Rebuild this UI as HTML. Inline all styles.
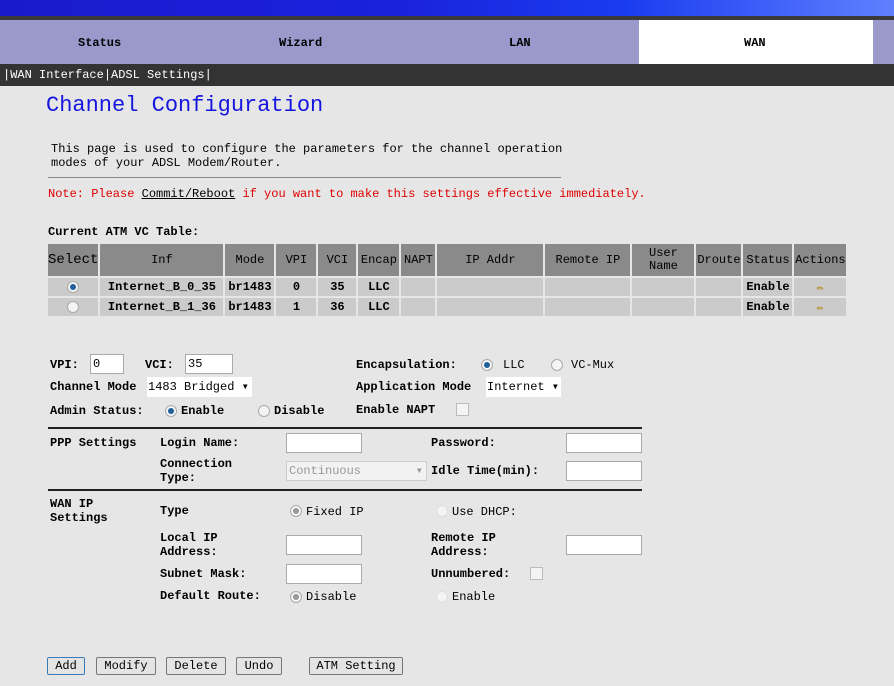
<!DOCTYPE html>
<html><head><meta charset="utf-8"><style>
*{margin:0;padding:0;box-sizing:border-box}
body{width:894px;height:686px;background:#e6e6e6;font-family:"Liberation Mono","Noto Sans CJK SC",monospace;font-size:12px;color:#000;position:relative;overflow:hidden}
.a{position:absolute;white-space:nowrap;line-height:14px}
.b{font-weight:bold}
.in{position:absolute;background:#fff;border:1px solid #aaa;height:20px}
.rad{position:absolute;width:12px;height:12px;border-radius:50%;border:1px solid #aaa;background:#f4f4f4}
.rad.on::after{content:"";position:absolute;left:2px;top:2px;width:6px;height:6px;border-radius:50%;background:#1f5f9a}
.rad.dis.on::after{background:#999}
.hr{position:absolute;left:48px;width:594px;height:2px;background:#222}
.btn{position:absolute;top:657px;height:18px;border:1px solid #777;background:#e4e4e4;font-size:12px;line-height:16px;text-align:center;border-radius:2px}
table{position:absolute;left:48px;top:244px;border-collapse:separate;border-spacing:2px 2px;margin:-2px}
td{text-align:center;font-size:12px;padding:0}
tr.h td{background:#8a8a8a;height:32px;line-height:13px}
tr.r td{background:#cbcbcb;height:18px;font-weight:bold}
</style></head><body>
<div style="position:absolute;left:0;top:0;width:894px;height:16px;background:linear-gradient(90deg,#1a1acc 0%,#1a22dd 45%,#1a3cf0 70%,#6080ff 100%)"></div>
<div style="position:absolute;left:0;top:16px;width:894px;height:4px;background:#3a3a3a"></div>
<div style="position:absolute;left:0;top:20px;width:894px;height:44px;background:#9999cc"></div>
<div style="position:absolute;left:639px;top:20px;width:234px;height:44px;background:#fff"></div>
<div class="a b" style="left:78px;top:36px">Status</div>
<div class="a b" style="left:279px;top:36px">Wizard</div>
<div class="a b" style="left:509px;top:36px">LAN</div>
<div class="a b" style="left:744px;top:36px">WAN</div>
<div style="position:absolute;left:0;top:64px;width:894px;height:22px;background:#333"></div>
<div class="a" style="left:3px;top:68px;color:#fff">|WAN Interface|ADSL Settings|</div>
<div class="a" style="left:46px;top:94px;font-size:22px;line-height:24px;color:#1515e0">Channel Configuration</div>
<div class="a" style="left:51px;top:142px">This page is used to configure the parameters for the channel operation<br>modes of your ADSL Modem/Router.</div>
<div style="position:absolute;left:48px;top:177px;width:513px;height:1px;background:#888"></div>
<div class="a" style="left:48px;top:187px;color:#e00000">Note: Please <span style="color:#000;text-decoration:underline">Commit/Reboot</span> if you want to make this settings effective immediately.</div>
<div class="a b" style="left:48px;top:225px">Current ATM VC Table:</div>
<table>
<tr class="h"><td style="width:50px;font-size:14px">Select</td><td style="width:123px">Inf</td><td style="width:49px">Mode</td><td style="width:40px">VPI</td><td style="width:38px">VCI</td><td style="width:41px">Encap</td><td style="width:34px">NAPT</td><td style="width:106px">IP Addr</td><td style="width:85px">Remote IP</td><td style="width:62px">User<br>Name</td><td style="width:45px">Droute</td><td style="width:49px">Status</td><td style="width:52px">Actions</td></tr>
<tr class="r"><td><span class="rad on" style="position:relative;display:inline-block;top:2px"></span></td><td>Internet_B_0_35</td><td>br1483</td><td>0</td><td>35</td><td>LLC</td><td></td><td></td><td></td><td></td><td></td><td>Enable</td><td style="color:#b08000">&#9999;</td></tr>
<tr class="r"><td><span class="rad" style="position:relative;display:inline-block;top:2px"></span></td><td>Internet_B_1_36</td><td>br1483</td><td>1</td><td>36</td><td>LLC</td><td></td><td></td><td></td><td></td><td></td><td>Enable</td><td style="color:#b08000">&#9999;</td></tr>
</table>
<div class="a b" style="left:50px;top:358px">VPI:</div><div class="in" style="left:90px;top:354px;width:34px;padding-left:2px;line-height:18px">0</div>
<div class="a b" style="left:145px;top:358px">VCI:</div><div class="in" style="left:185px;top:354px;width:48px;padding-left:2px;line-height:18px">35</div>
<div class="a b" style="left:356px;top:358px">Encapsulation:</div>
<div class="rad on" style="left:481px;top:359px"></div><div class="a" style="left:503px;top:358px">LLC</div>
<div class="rad dis" style="left:551px;top:359px"></div><div class="a" style="left:571px;top:358px">VC-Mux</div>
<div class="a b" style="left:50px;top:380px">Channel Mode</div>
<div class="in" style="left:147px;top:377px;width:105px;border:none;line-height:20px;padding-left:1px">1483 Bridged &#9662;</div>
<div class="a b" style="left:356px;top:380px">Application Mode</div>
<div class="in" style="left:486px;top:377px;width:75px;border:none;line-height:20px;padding-left:1px">Internet &#9662;</div>
<div class="a b" style="left:50px;top:404px">Admin Status:</div>
<div class="rad on" style="left:165px;top:405px"></div><div class="a b" style="left:181px;top:404px">Enable</div>
<div class="rad" style="left:258px;top:405px"></div><div class="a b" style="left:274px;top:404px">Disable</div>
<div class="a b" style="left:356px;top:403px">Enable NAPT</div>
<div style="position:absolute;left:456px;top:403px;width:13px;height:13px;border:1px solid #bbb;background:#f4f4f4"></div>
<div class="hr" style="top:427px"></div>
<div class="a b" style="left:50px;top:436px">PPP Settings</div>
<div class="a b" style="left:160px;top:436px">Login Name:</div><div class="in" style="left:286px;top:433px;width:76px"></div>
<div class="a b" style="left:431px;top:436px">Password:</div><div class="in" style="left:566px;top:433px;width:76px"></div>
<div class="a b" style="left:160px;top:457px">Connection<br>Type:</div>
<div class="in" style="left:286px;top:461px;width:141px;color:#999;border-color:#ccc;background:#f2f2f2;line-height:18px;padding-left:2px">Continuous<span style="position:absolute;right:3px">&#9662;</span></div>
<div class="a b" style="left:431px;top:464px">Idle Time(min):</div><div class="in" style="left:566px;top:461px;width:76px"></div>
<div class="hr" style="top:489px"></div>
<div class="a b" style="left:50px;top:497px">WAN IP<br>Settings</div>
<div class="a b" style="left:160px;top:504px">Type</div>
<div class="rad dis on" style="left:290px;top:505px"></div><div class="a" style="left:306px;top:505px">Fixed IP</div>
<div class="rad" style="left:436px;top:505px;border-color:#ddd"></div><div class="a" style="left:452px;top:505px">Use DHCP:</div>
<div class="a b" style="left:160px;top:531px">Local IP<br>Address:</div><div class="in" style="left:286px;top:535px;width:76px"></div>
<div class="a b" style="left:431px;top:531px">Remote IP<br>Address:</div><div class="in" style="left:566px;top:535px;width:76px"></div>
<div class="a b" style="left:160px;top:567px">Subnet Mask:</div><div class="in" style="left:286px;top:564px;width:76px"></div>
<div class="a b" style="left:431px;top:567px">Unnumbered:</div>
<div style="position:absolute;left:530px;top:567px;width:13px;height:13px;border:1px solid #bbb;background:#f4f4f4"></div>
<div class="a b" style="left:160px;top:589px">Default Route:</div>
<div class="rad dis on" style="left:290px;top:591px"></div><div class="a" style="left:306px;top:590px">Disable</div>
<div class="rad" style="left:436px;top:591px;border-color:#ddd"></div><div class="a" style="left:452px;top:590px">Enable</div>
<div class="btn" style="left:47px;width:38px;border-color:#3a7ab8">Add</div>
<div class="btn" style="left:96px;width:60px">Modify</div>
<div class="btn" style="left:166px;width:60px">Delete</div>
<div class="btn" style="left:236px;width:46px">Undo</div>
<div class="btn" style="left:309px;width:94px">ATM Setting</div>
</body></html>
